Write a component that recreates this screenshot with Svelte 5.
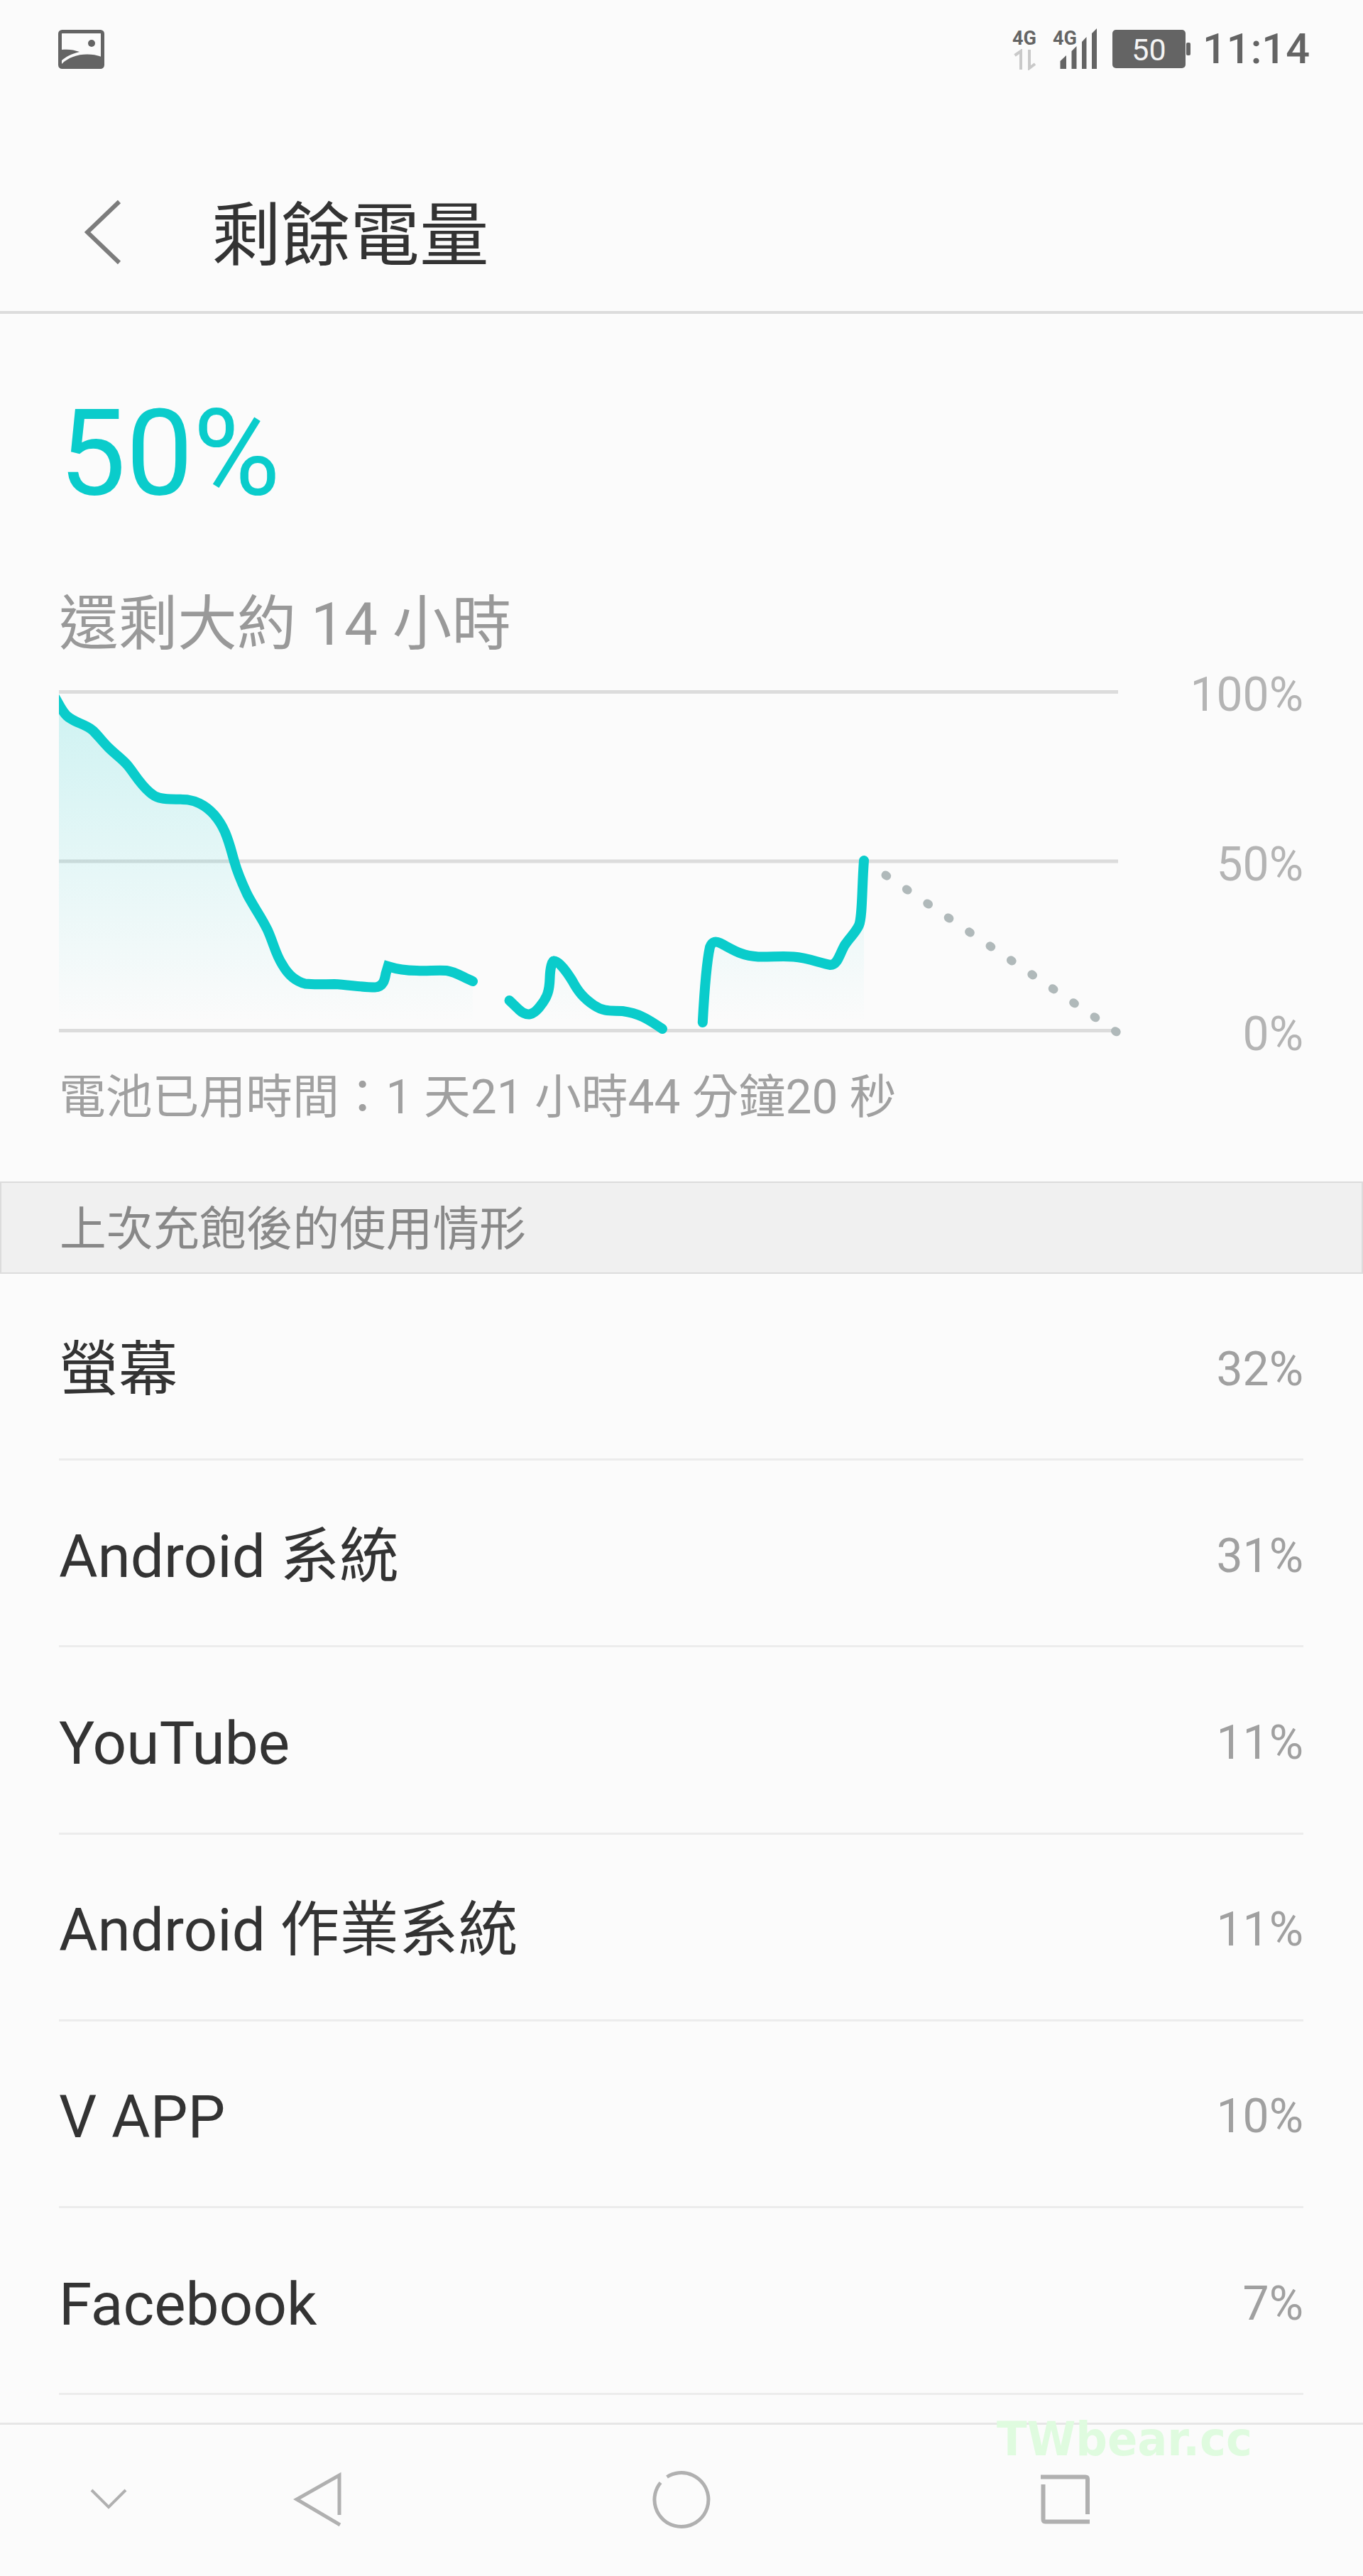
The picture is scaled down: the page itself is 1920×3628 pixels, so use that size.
<script>
  const level = 50;
  const gridLines = [974.5, 1213, 1451.5];
  const labels = ['100%', '50%', '0%'];

  // each run of the battery history, split where the phone was off
  const history = [
    {
      line: 'M75 978 C82 989 86 1000 94 1008 C106 1019 118 1018 131 1029 C140 1038 144 1044 153 1053 C162 1062 171 1068 179 1077 C190 1090 196 1103 211 1116 C220 1124 227 1125 240 1125.5 C259 1126 268 1125 281 1131.5 C296 1139 309 1154 317 1172 C324 1189 325 1196 330 1213 C335 1231 341 1244 348 1259 C357 1277 368 1291 377 1310 C386 1330 388 1344 398 1359 C406 1373 416 1382 430 1385.5 C443 1387 457 1386 471 1386 C491 1387 510 1390.5 528 1390.5 C540 1390 542 1380 543.5 1371 L546.5 1361 C559 1365 572 1367 587 1367 C601 1368 614 1366 629 1367 C643 1369 653 1377 666 1382',
      start: 75,
      end: 666,
    },
    {
      line: 'M717.5 1409 L731 1422 C743 1433 752 1429 761 1417 C771 1405 774 1395 774.5 1378 C775 1362 778 1353 780 1353.5 C786 1352 798 1368 806 1381 C814 1396 822 1406 837 1416 C852 1426 862 1423 877 1424 C899 1427 911 1434 933 1449',
      start: 717.5,
      end: 933,
    },
    {
      line: 'M989.8 1440 C992 1400 996 1352 1000 1334 C1003 1326 1008 1324 1018 1330 C1035 1339 1045 1346 1068 1347.5 C1085 1348 1102 1346 1118 1347.5 C1138 1349 1154 1356 1170 1359 C1180 1359 1182 1345 1190 1331 C1198 1319 1205 1314 1210 1303 C1215 1291 1214 1250 1217 1212',
      start: 989.8,
      end: 1217,
    },
  ];

  const usage = [
    { name: '螢幕', percent: 32 },
    { name: 'Android 系統', percent: 31 },
    { name: 'YouTube', percent: 11 },
    { name: 'Android 作業系統', percent: 11 },
    { name: 'V APP', percent: 10 },
    { name: 'Facebook', percent: 7 },
  ];
</script>

<main lang="zh-TW">
  <div class="status">
    <svg class="photo" viewBox="0 0 66 55" width="66" height="55">
      <rect x="2.5" y="2.5" width="60" height="50" rx="3" fill="none" stroke="#646464" stroke-width="5" />
      <circle cx="47" cy="19" r="5" />
      <path d="M5 28 C14 27 22 28 30 31 C18 34 11 38 5 43 Z" />
      <path d="M5 48 C18 35 41 31 61 38 V52 H5 Z" />
    </svg>

    <div class="indicators">
      <div class="network">
        <span class="tech">4G</span>
        <svg class="arrows" viewBox="0 0 34 30" width="34" height="30">
          <path d="M3.5 9 L12 3 V29 M24 1 V27 L32 21" />
        </svg>
      </div>
      <div class="signal">
        <span class="tech">4G</span>
        <svg viewBox="0 0 62 58" width="62" height="58">
          <path d="M10.5 57 V46 L19 38 V57 Z M26.5 57 V32 L33.5 25 V57 Z M41 57 V19 L47.5 12 V57 Z M55 57 V7 L62 0 V57 Z" />
        </svg>
      </div>
      <div class="battery">{level}</div>
      <div class="clock">11:14</div>
    </div>
  </div>

  <header>
    <svg viewBox="0 0 52 92" width="52" height="92">
      <path d="M49 3 L4 46 L49 89" />
    </svg>
    <h1>剩餘電量</h1>
  </header>

  <section class="summary">
    <div class="level">{level}%</div>
    <div class="remaining">還剩大約 14 小時</div>
    <div class="chart">
      <svg viewBox="83 960 1500 506" width="1500" height="506">
        <defs>
          <linearGradient id="fade" gradientUnits="userSpaceOnUse" x1="0" y1="974" x2="0" y2="1440">
            <stop offset="0" stop-color="#0acccb" stop-opacity="0.19" />
            <stop offset="1" stop-color="#0acccb" stop-opacity="0" />
          </linearGradient>
        </defs>
        {#each gridLines as y}
          <line class="grid" x1="83" x2="1575" y1={y} y2={y} />
        {/each}
        {#each history as run}
          <path fill="url(#fade)" d="{run.line} L{run.end} 1449 L{run.start} 1449 Z" />
          <path class="run" d={run.line} />
        {/each}
        <path class="forecast" d="M1247.5 1232.5 L1574 1454.2" />
      </svg>
      <div class="labels">
        {#each labels as label}
          <span>{label}</span>
        {/each}
      </div>
    </div>
    <div class="elapsed">電池已用時間：1 天21 小時44 分鐘20 秒</div>
  </section>

  <h2>上次充飽後的使用情形</h2>

  <ul>
    {#each usage as item}
      <li>
        <span class="name">{item.name}</span>
        <span class="percent">{item.percent}%</span>
      </li>
    {/each}
  </ul>

  <nav>
    <svg class="hide" viewBox="0 0 52 30" width="52" height="30">
      <path d="M2 2 L26 26 L50 2" />
    </svg>
    <svg class="back" viewBox="0 0 70 80" width="70" height="80">
      <path d="M65 62 V6 L5 40 L66 76" />
    </svg>
    <svg class="home" viewBox="0 0 84 84" width="84" height="84">
      <path d="M21.5 10.5 A38 38 0 1 1 12.5 18.5" />
    </svg>
    <svg class="recent" viewBox="0 0 70 70" width="70" height="70">
      <path d="M0 3.5 H63 Q66 3.5 66 6.5 V56 M3.5 14 V63 Q3.5 66.5 6.5 66.5 H69" />
    </svg>
    <div class="watermark">TWbear.cc</div>
  </nav>
</main>

<style>
  :global(body) {
    background: #fbfbfb;
  }

  main {
    width: 1920px;
    height: 3628px;
    overflow: hidden;
    display: flex;
    flex-direction: column;
    background: #fbfbfb;
    font-family: Roboto, 'Noto Sans CJK TC', sans-serif;
  }

  svg {
    display: block;
    flex: none;
  }

  .status {
    display: flex;
    justify-content: space-between;
    align-items: center;
    height: 138px;
    padding: 0 75px 0 82px;
    box-sizing: border-box;
    fill: #646464;
    color: #646464;
  }

  .indicators {
    display: flex;
    align-items: center;
  }

  .network {
    width: 34px;
    height: 58px;
    margin-right: 23px;
  }

  .tech {
    display: block;
    font-size: 27px;
    font-weight: 700;
    line-height: 29px;
  }

  .arrows {
    fill: none;
    stroke: #c9c9c9;
    stroke-width: 4;
  }

  .signal {
    display: grid;
    height: 58px;
    margin-right: 22px;
  }

  .signal > * {
    grid-area: 1 / 1;
  }

  .battery {
    position: relative;
    width: 103px;
    height: 54px;
    margin-right: 24px;
    border-radius: 5px;
    background: #646464;
    color: #f4f4f4;
    font-size: 43px;
    line-height: 57px;
    text-align: center;
  }

  .battery::after {
    content: '';
    position: absolute;
    left: 104px;
    top: 18px;
    width: 6px;
    height: 18px;
    border-radius: 2px;
    background: #646464;
  }

  .clock {
    font-size: 59.5px;
    font-weight: 500;
    line-height: 60px;
  }

  header {
    display: flex;
    align-items: center;
    height: 304px;
    padding: 0 0 0 119px;
    border-bottom: 4px solid #dcdcdc;
    box-sizing: border-box;
  }

  header svg {
    margin-top: 77px;
    fill: none;
    stroke: #7c7c7c;
    stroke-width: 6;
  }

  h1 {
    margin: 90px 0 0 127px;
    color: #333;
    font-size: 97.7px;
    font-weight: 400;
    line-height: 120px;
  }

  .summary {
    height: 1222px;
    padding: 0 84px 0 83px;
    box-sizing: border-box;
  }

  .level {
    padding-top: 97px;
    color: #0acccb;
    font-size: 168px;
    line-height: 200px;
  }

  .remaining {
    margin-top: 80px;
    color: #999;
    font-size: 83.6px;
    line-height: 120px;
  }

  .chart {
    display: flex;
    justify-content: space-between;
    margin-top: 21px;
  }

  .grid {
    stroke: #dcdcdc;
    stroke-width: 5;
  }

  .run {
    fill: none;
    stroke: #0acccb;
    stroke-width: 14;
    stroke-linecap: round;
  }

  .forecast {
    fill: none;
    stroke: #b0b9ba;
    stroke-width: 12;
    stroke-linecap: round;
    stroke-dasharray: 2 33.55;
  }

  .labels {
    display: flex;
    flex-direction: column;
    justify-content: space-between;
    margin: -21px 0 -31px;
    color: #b4b4b4;
    font-size: 66px;
    line-height: 80px;
    text-align: right;
  }

  .elapsed {
    margin-top: 32px;
    color: #a0a0a0;
    font-size: 65.8px;
    line-height: 96px;
  }

  h2 {
    height: 130px;
    margin: 0;
    padding-left: 82px;
    border: 2px solid #dcdcdc;
    box-sizing: border-box;
    background: #f0f0f0;
    color: #888;
    font-size: 65.7px;
    font-weight: 400;
    line-height: 131px;
  }

  ul {
    height: 1618px;
    margin: 0 84px 0 83px;
    padding: 0;
    list-style: none;
  }

  li {
    display: flex;
    justify-content: space-between;
    align-items: center;
    height: 263.2px;
    padding-top: 9px;
    border-bottom: 3px solid #ececec;
    box-sizing: border-box;
  }

  .name {
    color: #333;
    font-size: 83.7px;
    line-height: 120px;
  }

  .percent {
    color: #a0a0a0;
    font-size: 66px;
    line-height: 122px;
  }

  nav {
    position: relative;
    display: flex;
    align-items: center;
    height: 212px;
    border-top: 3px solid #e6e6e6;
    box-sizing: border-box;
    fill: none;
    stroke: #b0b0b0;
    stroke-width: 5;
  }

  .hide {
    margin-left: 127px;
    stroke-width: 4;
  }

  .back {
    margin-left: 234px;
  }

  .home {
    margin-left: 435px;
  }

  .recent {
    margin-left: 464px;
    stroke-width: 6;
  }

  .watermark {
    position: absolute;
    left: 1404px;
    top: -18px;
    color: #dffbdf;
    font-family: 'DejaVu Sans', sans-serif;
    font-size: 66px;
    font-weight: 700;
    line-height: 78px;
    transform: scaleX(0.945);
    transform-origin: left;
  }
</style>
